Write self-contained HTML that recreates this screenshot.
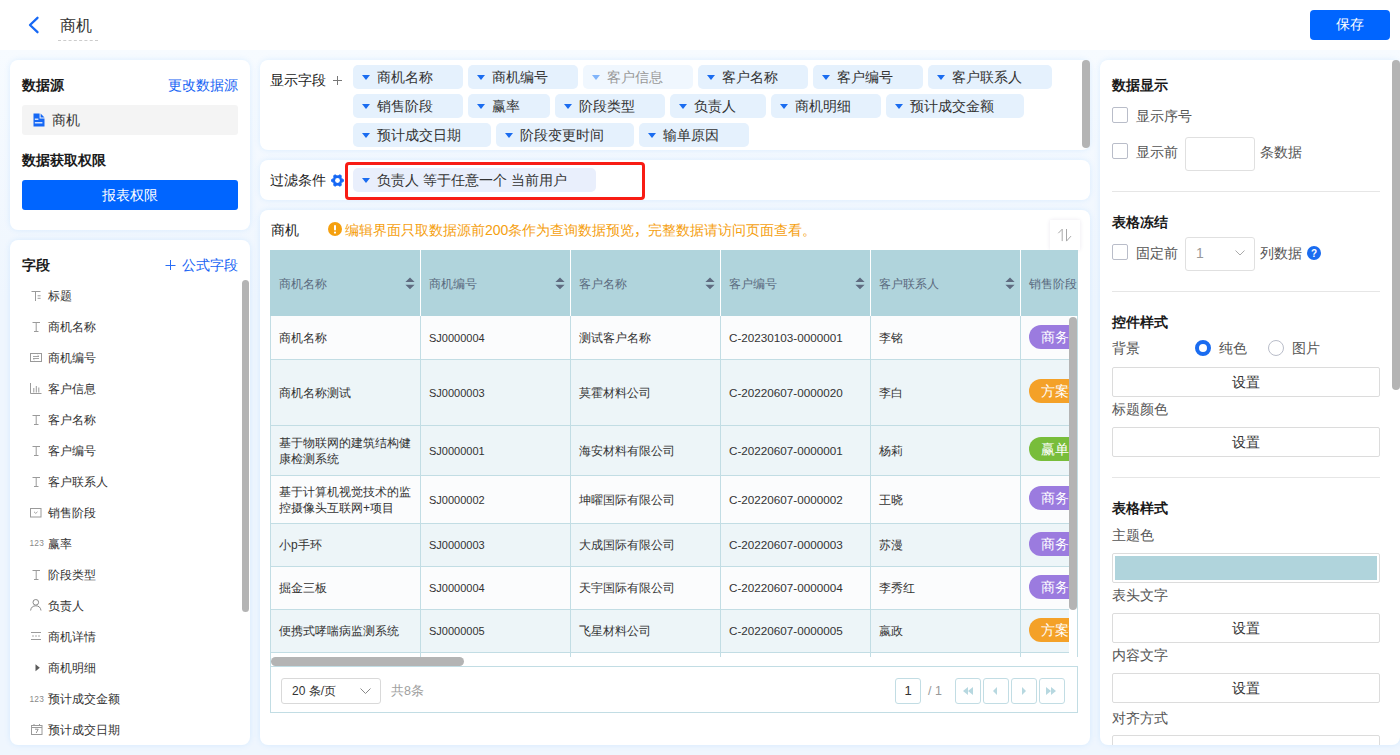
<!DOCTYPE html>
<html><head><meta charset="utf-8">
<style>
*{box-sizing:border-box;margin:0;padding:0}
html,body{width:1400px;height:755px;overflow:hidden}
body{font-family:"Liberation Sans",sans-serif;background:linear-gradient(to bottom,#fff 0,#fff 50px,#f7fbff 50px,#eff6fe 300px,#eff6fe 755px);color:#333;font-size:13px;position:relative}
.abs{position:absolute;white-space:nowrap}
.hdr{left:0;top:0;width:1400px;height:50px;background:#fff}
.panel{position:absolute;background:#fff;border-radius:8px;box-shadow:0 0 6px rgba(0,140,255,.11);overflow:hidden}
.btn{position:absolute;background:#0065ff;color:#fff;border-radius:3px;text-align:center}
.t14{font-size:14px}
.bold{font-weight:bold;color:#1a1a1a}
.blue{color:#1764f4}
.fi{position:absolute;left:38px;font-size:12px;color:#333;line-height:16px}
.ic{position:absolute;left:20px}
.tag{position:absolute;height:24px;background:#e5f1fd;border-radius:5px;font-size:14px;line-height:24px;color:#333}
.tag .tri{position:absolute;left:9px;top:10px;width:0;height:0;border-left:4px solid transparent;border-right:4px solid transparent;border-top:5px solid #1a6cf0}
.tag span{position:absolute;left:24px;top:0}
.cell{position:absolute;font-size:12px;color:#333;line-height:16px}
.lbl{position:absolute;font-size:14px;color:#555;line-height:16px}
.sbtn{position:absolute;left:12px;width:268px;height:30px;border:1px solid #dcdcdc;border-radius:2px;text-align:center;line-height:28px;font-size:14px;color:#333;background:#fff}
.cb{position:absolute;left:12px;width:16px;height:16px;border:1px solid #b9bdc9;border-radius:2px;background:#fff}
.pg{position:absolute;top:678px;width:26px;height:25px;border:1px solid #c2dde4;border-radius:3px;background:#fff}
</style></head><body>

<div class="abs hdr">
  <svg class="abs" style="left:27px;top:16px" width="14" height="18" viewBox="0 0 14 18"><path d="M10.5 1.8 L3 9 L10.5 16.2" fill="none" stroke="#1668f5" stroke-width="2.3" stroke-linecap="round" stroke-linejoin="round"/></svg>
  <div class="abs" style="left:60px;top:16px;font-size:16px;color:#333">商机</div>
  <div class="abs" style="left:58px;top:40px;width:40px;border-top:1px dashed #ccc"></div>
  <div class="btn" style="left:1310px;top:10px;width:80px;height:30px;line-height:29px;font-size:14px;border-radius:4px">保存</div>
</div>

<div class="panel" style="left:10px;top:60px;width:240px;height:170px">
  <div class="abs bold t14" style="left:12px;top:17px">数据源</div>
  <div class="abs blue t14" style="left:158px;top:17px">更改数据源</div>
  <div class="abs" style="left:12px;top:45px;width:216px;height:30px;background:#f4f4f4;border-radius:3px"></div>
  <svg class="abs" style="left:23px;top:53px" width="12" height="14" viewBox="0 0 12 14"><path d="M0.5 0.5 H6.6 V5.4 H11.5 V13.5 H0.5 Z" fill="#1668f5"/><path d="M7.6 0.5 L11.5 4.4 H7.6 Z" fill="#1668f5"/><rect x="1.8" y="5.6" width="3.6" height="1.2" fill="#fff"/><rect x="1.8" y="9.2" width="7.6" height="1.2" fill="#fff"/></svg>
  <div class="abs t14" style="left:42px;top:52px">商机</div>
  <div class="abs bold t14" style="left:12px;top:92px">数据获取权限</div>
  <div class="btn" style="left:12px;top:120px;width:216px;height:30px;line-height:30px;font-size:14px">报表权限</div>
</div>

<div class="panel" style="left:10px;top:240px;width:240px;height:505px">
<div class="abs bold t14" style="left:12px;top:17px">字段</div>
<svg class="abs" style="left:155px;top:20px" width="11" height="11" viewBox="0 0 11 11"><path d="M5.5 0 V10 M0.5 5.5 H10.5" stroke="#2a6ef5" stroke-width="1"/></svg>
<div class="abs blue t14" style="left:172px;top:17px">公式字段</div>
<div class="abs" style="left:21px;top:51px;line-height:10px"><svg width="11" height="11" viewBox="0 0 11 11"><path d="M0.5 0.5 H9.5 M4.5 0.5 V10 M6.6 4.8 H9.6 M6.6 7.3 H9.6" stroke="#9a9a9a" stroke-width="1" fill="none"/></svg></div>
<div class="fi" style="top:48px">标题</div>
<div class="abs" style="left:22px;top:82px;line-height:10px"><svg width="9" height="11" viewBox="0 0 9 11"><path d="M0.5 0.5 H8 M4.2 0.5 V9.5 M2 9.5 H6.5" stroke="#9a9a9a" stroke-width="1" fill="none"/></svg></div>
<div class="fi" style="top:79px">商机名称</div>
<div class="abs" style="left:20px;top:113px;line-height:10px"><svg width="12" height="9" viewBox="0 0 12 9"><rect x="0.5" y="0.5" width="11" height="8" stroke="#9a9a9a" fill="none"/><path d="M3 3.5 H9 L7.6 2.2 M9 5.5 H3 L4.4 6.8" stroke="#9a9a9a" fill="none" stroke-width="0.9"/></svg></div>
<div class="fi" style="top:110px">商机编号</div>
<div class="abs" style="left:20px;top:143px;line-height:10px"><svg width="12" height="11" viewBox="0 0 12 11"><path d="M0.5 0 V10.5 H11.5 M3.8 5 V9.5 M6.3 3 V9.5 M8.8 4.5 V9.5" stroke="#9a9a9a" fill="none"/></svg></div>
<div class="fi" style="top:141px">客户信息</div>
<div class="abs" style="left:22px;top:175px;line-height:10px"><svg width="9" height="11" viewBox="0 0 9 11"><path d="M0.5 0.5 H8 M4.2 0.5 V9.5 M2 9.5 H6.5" stroke="#9a9a9a" stroke-width="1" fill="none"/></svg></div>
<div class="fi" style="top:172px">客户名称</div>
<div class="abs" style="left:22px;top:206px;line-height:10px"><svg width="9" height="11" viewBox="0 0 9 11"><path d="M0.5 0.5 H8 M4.2 0.5 V9.5 M2 9.5 H6.5" stroke="#9a9a9a" stroke-width="1" fill="none"/></svg></div>
<div class="fi" style="top:203px">客户编号</div>
<div class="abs" style="left:22px;top:237px;line-height:10px"><svg width="9" height="11" viewBox="0 0 9 11"><path d="M0.5 0.5 H8 M4.2 0.5 V9.5 M2 9.5 H6.5" stroke="#9a9a9a" stroke-width="1" fill="none"/></svg></div>
<div class="fi" style="top:234px">客户联系人</div>
<div class="abs" style="left:20px;top:268px;line-height:10px"><svg width="12" height="10" viewBox="0 0 12 10"><rect x="0.5" y="0.5" width="10.5" height="8.5" stroke="#9a9a9a" fill="none"/><path d="M4 3.8 L5.75 5.4 L7.5 3.8" stroke="#9a9a9a" fill="none" stroke-width="0.9"/></svg></div>
<div class="fi" style="top:265px">销售阶段</div>
<div class="abs" style="left:19.5px;top:299px;line-height:10px"><span style="display:block;font-family:Liberation Sans,sans-serif;font-size:8.3px;line-height:8px;color:#888;letter-spacing:0.2px;margin-top:-0.5px">123</span></div>
<div class="fi" style="top:296px">赢率</div>
<div class="abs" style="left:22px;top:330px;line-height:10px"><svg width="9" height="11" viewBox="0 0 9 11"><path d="M0.5 0.5 H8 M4.2 0.5 V9.5 M2 9.5 H6.5" stroke="#9a9a9a" stroke-width="1" fill="none"/></svg></div>
<div class="fi" style="top:327px">阶段类型</div>
<div class="abs" style="left:20px;top:359px;line-height:10px"><svg width="12" height="12" viewBox="0 0 12 12"><circle cx="5.8" cy="3.3" r="2.8" stroke="#8a8a8a" fill="none"/><path d="M0.6 11.5 C1 8.3 3 6.8 5.8 6.8 C8.6 6.8 10.6 8.3 11 11.5" stroke="#8a8a8a" fill="none"/></svg></div>
<div class="fi" style="top:358px">负责人</div>
<div class="abs" style="left:21px;top:392px;line-height:10px"><svg width="11" height="9" viewBox="0 0 11 9"><path d="M0 0.5 H10 M0 7.5 H10" stroke="#9a9a9a" fill="none"/><path d="M1 4 H9.5" stroke="#aaa" stroke-dasharray="2 1" fill="none"/></svg></div>
<div class="fi" style="top:389px">商机详情</div>
<div class="abs" style="left:24.5px;top:423px;line-height:10px"><svg width="6" height="8" viewBox="0 0 6 8"><path d="M0.5 0.3 L4.8 3.8 L0.5 7.3 Z" fill="#5a5a5a"/></svg></div>
<div class="fi" style="top:420px">商机明细</div>
<div class="abs" style="left:19.5px;top:455px;line-height:10px"><span style="display:block;font-family:Liberation Sans,sans-serif;font-size:8.3px;line-height:8px;color:#888;letter-spacing:0.2px;margin-top:-0.5px">123</span></div>
<div class="fi" style="top:451px">预计成交金额</div>
<div class="abs" style="left:21px;top:484px;line-height:10px"><svg width="12" height="11" viewBox="0 0 12 11"><rect x="0.5" y="1.5" width="10.5" height="9" stroke="#9a9a9a" fill="none"/><path d="M0.5 3.5 H11 M3 0 V2 M8.5 0 V2" stroke="#9a9a9a"/><path d="M4 5.2 H7.2 L5.2 9" stroke="#8a8a8a" fill="none" stroke-width="0.9"/></svg></div>
<div class="fi" style="top:482px">预计成交日期</div>
<div class="abs" style="left:232px;top:40px;width:7px;height:332px;background:#b4b4b4;border-radius:4px"></div>
</div>
<div class="panel" style="left:260px;top:60px;width:830px;height:90px">
<div class="abs t14" style="left:10px;top:12px;color:#222">显示字段</div>
<svg class="abs" style="left:73px;top:16px" width="9" height="9" viewBox="0 0 9 9"><path d="M4.5 0 V9 M0 4.5 H9" stroke="#777" stroke-width="1"/></svg>
<div class="tag" style="left:93px;top:5px;width:110px;"><i class="tri" style=""></i><span>商机名称</span></div>
<div class="tag" style="left:208px;top:5px;width:110px;"><i class="tri" style=""></i><span>商机编号</span></div>
<div class="tag" style="left:323px;top:5px;width:110px;background:#f0f7fe;color:#999"><i class="tri" style="border-top-color:#80b4fa"></i><span>客户信息</span></div>
<div class="tag" style="left:438px;top:5px;width:110px;"><i class="tri" style=""></i><span>客户名称</span></div>
<div class="tag" style="left:553px;top:5px;width:110px;"><i class="tri" style=""></i><span>客户编号</span></div>
<div class="tag" style="left:668px;top:5px;width:124px;"><i class="tri" style=""></i><span>客户联系人</span></div>
<div class="tag" style="left:93px;top:34px;width:110px;"><i class="tri" style=""></i><span>销售阶段</span></div>
<div class="tag" style="left:208px;top:34px;width:82px;"><i class="tri" style=""></i><span>赢率</span></div>
<div class="tag" style="left:295px;top:34px;width:110px;"><i class="tri" style=""></i><span>阶段类型</span></div>
<div class="tag" style="left:410px;top:34px;width:96px;"><i class="tri" style=""></i><span>负责人</span></div>
<div class="tag" style="left:511px;top:34px;width:110px;"><i class="tri" style=""></i><span>商机明细</span></div>
<div class="tag" style="left:626px;top:34px;width:138px;"><i class="tri" style=""></i><span>预计成交金额</span></div>
<div class="tag" style="left:93px;top:63px;width:138px;"><i class="tri" style=""></i><span>预计成交日期</span></div>
<div class="tag" style="left:236px;top:63px;width:138px;"><i class="tri" style=""></i><span>阶段变更时间</span></div>
<div class="tag" style="left:379px;top:63px;width:110px;"><i class="tri" style=""></i><span>输单原因</span></div>
</div>
<div class="abs" style="left:1082px;top:60px;width:8px;height:88px;background:#b4b4b4;border-radius:4px"></div>
<div class="panel" style="left:260px;top:160px;width:830px;height:40px">
<div class="abs t14" style="left:10px;top:12px;color:#222">过滤条件</div>
<svg class="abs" style="left:71px;top:14px" width="13" height="13" viewBox="0 0 13 13"><path d="M12.65 5.69 L12.65 7.31 L10.84 8.30 L10.23 9.36 L10.27 11.42 L8.87 12.23 L7.11 11.16 L5.89 11.16 L4.13 12.23 L2.73 11.42 L2.77 9.36 L2.16 8.30 L0.35 7.31 L0.35 5.69 L2.16 4.70 L2.77 3.64 L2.73 1.58 L4.13 0.77 L5.89 1.84 L7.11 1.84 L8.87 0.77 L10.27 1.58 L10.23 3.64 L10.84 4.70 Z" fill="#1668f5" stroke="#1668f5" stroke-width="0.8" stroke-linejoin="round"/><circle cx="6.5" cy="6.5" r="2.4" fill="#fff"/></svg>
<div class="tag" style="left:93px;top:8px;width:243px;background:#e9effc"><i class="tri"></i><span>负责人 等于任意一个 当前用户</span></div>
</div>
<div class="abs" style="left:345px;top:162px;width:300px;height:38px;border:3px solid #f81c14;border-radius:4px"></div>
<div class="panel" style="left:260px;top:210px;width:830px;height:535px">
<div class="abs t14" style="left:11px;top:12px;color:#222">商机</div>
<svg class="abs" style="left:68px;top:12px" width="14" height="14" viewBox="0 0 14 14"><circle cx="7" cy="7" r="7" fill="#f5a00f"/><rect x="6" y="3" width="2" height="5.5" rx="1" fill="#fff"/><circle cx="7" cy="10.6" r="1.1" fill="#fff"/></svg>
<div class="abs t14" style="left:85px;top:12px;color:#f5a00f">编辑界面只取数据源前200条作为查询数据预览<span lang="zh-CN" style="line-height:0">，</span>完整数据请访问页面查看。</div>
<div class="abs" style="left:790px;top:10px;width:30px;height:30px;background:#fff;box-shadow:0 0 4px rgba(60,40,120,.10)"></div>
<svg class="abs" style="left:795px;top:16px" width="20" height="18" viewBox="0 0 20 18"><path d="M3.3 7.2 L7.2 3.2 V15.1 M11.5 3 V15.1 L16 10.1" stroke="#a8a8a8" stroke-width="1" fill="none"/></svg>
</div>
<div class="abs" style="left:270px;top:250px;width:808px;height:407px;overflow:hidden">
<div class="abs" style="left:0;top:0;width:808px;height:66px;background:#b0d4dc"></div>
<div class="cell" style="left:9px;top:26px;color:#5a6a7e">商机名称</div>
<svg class="abs" style="left:135px;top:27px" width="10" height="13" viewBox="0 0 10 13"><path d="M5 0.4 L9.6 5 H0.4 Z M0.4 7.8 H9.6 L5 12.2 Z" fill="#5f6b80"/></svg>
<div class="abs" style="left:150px;top:0;width:1px;height:66px;background:#fff"></div>
<div class="cell" style="left:159px;top:26px;color:#5a6a7e">商机编号</div>
<svg class="abs" style="left:285px;top:27px" width="10" height="13" viewBox="0 0 10 13"><path d="M5 0.4 L9.6 5 H0.4 Z M0.4 7.8 H9.6 L5 12.2 Z" fill="#5f6b80"/></svg>
<div class="abs" style="left:300px;top:0;width:1px;height:66px;background:#fff"></div>
<div class="cell" style="left:309px;top:26px;color:#5a6a7e">客户名称</div>
<svg class="abs" style="left:435px;top:27px" width="10" height="13" viewBox="0 0 10 13"><path d="M5 0.4 L9.6 5 H0.4 Z M0.4 7.8 H9.6 L5 12.2 Z" fill="#5f6b80"/></svg>
<div class="abs" style="left:450px;top:0;width:1px;height:66px;background:#fff"></div>
<div class="cell" style="left:459px;top:26px;color:#5a6a7e">客户编号</div>
<svg class="abs" style="left:585px;top:27px" width="10" height="13" viewBox="0 0 10 13"><path d="M5 0.4 L9.6 5 H0.4 Z M0.4 7.8 H9.6 L5 12.2 Z" fill="#5f6b80"/></svg>
<div class="abs" style="left:600px;top:0;width:1px;height:66px;background:#fff"></div>
<div class="cell" style="left:609px;top:26px;color:#5a6a7e">客户联系人</div>
<svg class="abs" style="left:735px;top:27px" width="10" height="13" viewBox="0 0 10 13"><path d="M5 0.4 L9.6 5 H0.4 Z M0.4 7.8 H9.6 L5 12.2 Z" fill="#5f6b80"/></svg>
<div class="abs" style="left:750px;top:0;width:1px;height:66px;background:#fff"></div>
<div class="cell" style="left:759px;top:26px;color:#5a6a7e">销售阶段</div>
<div class="abs" style="left:0;top:66px;width:799px;height:43px;background:#fbfcfd"></div>
<div class="cell" style="left:9px;top:80.0px;">商机名称</div>
<div class="cell" style="left:159px;top:80.0px;font-size:11px;">SJ0000004</div>
<div class="cell" style="left:309px;top:80.0px;">测试客户名称</div>
<div class="cell" style="left:459px;top:80.0px;font-size:11.7px;">C-20230103-0000001</div>
<div class="cell" style="left:609px;top:80.0px;">李铭</div>
<div class="abs" style="left:759px;top:74.5px;width:80px;height:24px;border-radius:12px;background:#9b7bdf;color:#fff;font-size:14px;line-height:24px;padding-left:12px">商务谈判</div>
<div class="abs" style="left:0;top:109px;width:799px;height:66px;background:#edf5f8"></div>
<div class="cell" style="left:9px;top:134.5px;">商机名称测试</div>
<div class="cell" style="left:159px;top:134.5px;font-size:11px;">SJ0000003</div>
<div class="cell" style="left:309px;top:134.5px;">莫霍材料公司</div>
<div class="cell" style="left:459px;top:134.5px;font-size:11.7px;">C-20220607-0000020</div>
<div class="cell" style="left:609px;top:134.5px;">李白</div>
<div class="abs" style="left:759px;top:129.0px;width:80px;height:24px;border-radius:12px;background:#f4a128;color:#fff;font-size:14px;line-height:24px;padding-left:12px">方案报价</div>
<div class="abs" style="left:0;top:175px;width:799px;height:50px;background:#edf5f8"></div>
<div class="cell" style="left:9px;top:184.5px;">基于物联网的建筑结构健<br>康检测系统</div>
<div class="cell" style="left:159px;top:192.5px;font-size:11px;">SJ0000001</div>
<div class="cell" style="left:309px;top:192.5px;">海安材料有限公司</div>
<div class="cell" style="left:459px;top:192.5px;font-size:11.7px;">C-20220607-0000001</div>
<div class="cell" style="left:609px;top:192.5px;">杨莉</div>
<div class="abs" style="left:759px;top:187.0px;width:80px;height:24px;border-radius:12px;background:#78bd3a;color:#fff;font-size:14px;line-height:24px;padding-left:12px">赢单</div>
<div class="abs" style="left:0;top:225px;width:799px;height:48px;background:#fbfcfd"></div>
<div class="cell" style="left:9px;top:233.5px;">基于计算机视觉技术的监<br>控摄像头互联网+项目</div>
<div class="cell" style="left:159px;top:241.5px;font-size:11px;">SJ0000002</div>
<div class="cell" style="left:309px;top:241.5px;">坤曜国际有限公司</div>
<div class="cell" style="left:459px;top:241.5px;font-size:11.7px;">C-20220607-0000002</div>
<div class="cell" style="left:609px;top:241.5px;">王晓</div>
<div class="abs" style="left:759px;top:236.0px;width:80px;height:24px;border-radius:12px;background:#9b7bdf;color:#fff;font-size:14px;line-height:24px;padding-left:12px">商务谈判</div>
<div class="abs" style="left:0;top:273px;width:799px;height:43px;background:#edf5f8"></div>
<div class="cell" style="left:9px;top:287.0px;">小p手环</div>
<div class="cell" style="left:159px;top:287.0px;font-size:11px;">SJ0000003</div>
<div class="cell" style="left:309px;top:287.0px;">大成国际有限公司</div>
<div class="cell" style="left:459px;top:287.0px;font-size:11.7px;">C-20220607-0000003</div>
<div class="cell" style="left:609px;top:287.0px;">苏漫</div>
<div class="abs" style="left:759px;top:281.5px;width:80px;height:24px;border-radius:12px;background:#9b7bdf;color:#fff;font-size:14px;line-height:24px;padding-left:12px">商务谈判</div>
<div class="abs" style="left:0;top:316px;width:799px;height:43px;background:#fbfcfd"></div>
<div class="cell" style="left:9px;top:330.0px;">掘金三板</div>
<div class="cell" style="left:159px;top:330.0px;font-size:11px;">SJ0000004</div>
<div class="cell" style="left:309px;top:330.0px;">天宇国际有限公司</div>
<div class="cell" style="left:459px;top:330.0px;font-size:11.7px;">C-20220607-0000004</div>
<div class="cell" style="left:609px;top:330.0px;">李秀红</div>
<div class="abs" style="left:759px;top:324.5px;width:80px;height:24px;border-radius:12px;background:#9b7bdf;color:#fff;font-size:14px;line-height:24px;padding-left:12px">商务谈判</div>
<div class="abs" style="left:0;top:359px;width:799px;height:43px;background:#edf5f8"></div>
<div class="cell" style="left:9px;top:373.0px;">便携式哮喘病监测系统</div>
<div class="cell" style="left:159px;top:373.0px;font-size:11px;">SJ0000005</div>
<div class="cell" style="left:309px;top:373.0px;">飞星材料公司</div>
<div class="cell" style="left:459px;top:373.0px;font-size:11.7px;">C-20220607-0000005</div>
<div class="cell" style="left:609px;top:373.0px;">嬴政</div>
<div class="abs" style="left:759px;top:367.5px;width:80px;height:24px;border-radius:12px;background:#f4a128;color:#fff;font-size:14px;line-height:24px;padding-left:12px">方案报价</div>
<div class="abs" style="left:0;top:109px;width:799px;height:1px;background:#c2dde4"></div>
<div class="abs" style="left:0;top:175px;width:799px;height:1px;background:#c2dde4"></div>
<div class="abs" style="left:0;top:225px;width:799px;height:1px;background:#c2dde4"></div>
<div class="abs" style="left:0;top:273px;width:799px;height:1px;background:#c2dde4"></div>
<div class="abs" style="left:0;top:316px;width:799px;height:1px;background:#c2dde4"></div>
<div class="abs" style="left:0;top:359px;width:799px;height:1px;background:#c2dde4"></div>
<div class="abs" style="left:0;top:402px;width:799px;height:1px;background:#c2dde4"></div>
<div class="abs" style="left:0;top:66px;width:1px;height:341px;background:#c2dde4"></div>
<div class="abs" style="left:150px;top:66px;width:1px;height:341px;background:#c2dde4"></div>
<div class="abs" style="left:300px;top:66px;width:1px;height:341px;background:#c2dde4"></div>
<div class="abs" style="left:450px;top:66px;width:1px;height:341px;background:#c2dde4"></div>
<div class="abs" style="left:600px;top:66px;width:1px;height:341px;background:#c2dde4"></div>
<div class="abs" style="left:750px;top:66px;width:1px;height:341px;background:#c2dde4"></div>
<div class="abs" style="left:799px;top:66px;width:9px;height:341px;background:#fff"></div>
<div class="abs" style="left:807px;top:66px;width:1px;height:341px;background:#c2dde4"></div>
<div class="abs" style="left:799px;top:67px;width:8px;height:293px;background:#b4b4b4;border-radius:4px"></div>
</div>
<div class="abs" style="left:270px;top:657px;width:808px;height:9px;background:#fff;border-left:1px solid #c2dde4"></div>
<div class="abs" style="left:271px;top:657px;width:193px;height:9px;background:#b4b4b4;border-radius:5px"></div>
<div class="abs" style="left:270px;top:666px;width:808px;height:47px;border:1px solid #c2dde4;background:#fff"></div>
<div class="abs" style="left:281px;top:678px;width:100px;height:26px;border:1px solid #d9d9d9;border-radius:3px;background:#fff"></div>
<div class="abs" style="left:292px;top:683px;font-size:12px;color:#333;line-height:16px">20 条/页</div>
<svg class="abs" style="left:360px;top:688px" width="11" height="7" viewBox="0 0 11 7"><path d="M0.5 0.5 L5.5 5.5 L10.5 0.5" stroke="#888" fill="none"/></svg>
<div class="abs" style="left:391px;top:683px;font-size:12.5px;color:#a0a0a0;line-height:16px">共8条</div>
<div class="abs" style="left:895px;top:678px;width:26px;height:26px;border:1px solid #c2dde4;border-radius:3px;background:#fff;text-align:center;font-size:13px;line-height:24px;color:#333">1</div>
<div class="abs" style="left:928px;top:683px;font-size:12.5px;color:#999;line-height:16px">/ 1</div>
<div class="pg" style="left:955px;height:26px"><svg class="abs" style="left:6px;top:8px" width="12" height="8" viewBox="0 0 12 8"><path d="M6 0 L1 4 L6 8 Z M11 0 L6 4 L11 8 Z" fill="#b7d8e0"/></svg></div>
<div class="pg" style="left:983px;height:26px"><svg class="abs" style="left:6px;top:8px" width="12" height="8" viewBox="0 0 12 8"><path d="M7 0 L3 4 L7 8 Z" fill="#b7d8e0"/></svg></div>
<div class="pg" style="left:1011px;height:26px"><svg class="abs" style="left:6px;top:8px" width="12" height="8" viewBox="0 0 12 8"><path d="M4 0 L8 4 L4 8 Z" fill="#b7d8e0"/></svg></div>
<div class="pg" style="left:1039px;height:26px"><svg class="abs" style="left:6px;top:8px" width="12" height="8" viewBox="0 0 12 8"><path d="M0 0 L5 4 L0 8 Z M5 0 L10 4 L5 8 Z" fill="#b7d8e0"/></svg></div>
<div class="panel" style="left:1100px;top:60px;width:300px;height:685px">
<div class="abs bold t14" style="left:12px;top:17px">数据显示</div>
<div class="cb" style="top:47px"></div><div class="lbl" style="left:36px;top:48px">显示序号</div>
<div class="cb" style="top:83px"></div><div class="lbl" style="left:36px;top:84px">显示前</div>
<div class="abs" style="left:85px;top:77px;width:70px;height:34px;border:1px solid #e0e0e0;border-radius:3px"></div>
<div class="lbl" style="left:160px;top:84px">条数据</div>
<div class="abs" style="left:12px;top:131px;width:268px;height:1px;background:#e6e6e6"></div>
<div class="abs bold t14" style="left:12px;top:154px">表格冻结</div>
<div class="cb" style="top:184px"></div><div class="lbl" style="left:36px;top:185px">固定前</div>
<div class="abs" style="left:85px;top:177px;width:70px;height:34px;border:1px solid #e0e0e0;border-radius:3px"></div>
<div class="lbl" style="left:96px;top:185px;color:#999">1</div>
<svg class="abs" style="left:135px;top:190px" width="10" height="6" viewBox="0 0 10 6"><path d="M0.5 0.5 L5 5 L9.5 0.5" stroke="#aaa" fill="none"/></svg>
<div class="lbl" style="left:160px;top:185px">列数据</div>
<svg class="abs" style="left:207px;top:186px" width="14" height="14" viewBox="0 0 14 14"><circle cx="7" cy="7" r="7" fill="#1a6cf0"/><text x="7" y="11" text-anchor="middle" font-size="10" font-weight="bold" fill="#fff" font-family="Liberation Sans">?</text></svg>
<div class="abs" style="left:12px;top:231px;width:268px;height:1px;background:#e6e6e6"></div>
<div class="abs bold t14" style="left:12px;top:254px">控件样式</div>
<div class="lbl" style="left:12px;top:280px">背景</div>
<div class="abs" style="left:95px;top:280px;width:16px;height:16px;border-radius:50%;border:4.5px solid #1a6cf0;background:#fff"></div>
<div class="lbl" style="left:119px;top:280px">纯色</div>
<div class="abs" style="left:168px;top:280px;width:16px;height:16px;border-radius:50%;border:1px solid #b9bdc9;background:#fff"></div>
<div class="lbl" style="left:192px;top:280px">图片</div>
<div class="sbtn" style="top:307px">设置</div>
<div class="lbl" style="left:12px;top:341px">标题颜色</div>
<div class="sbtn" style="top:367px">设置</div>
<div class="abs" style="left:12px;top:417px;width:268px;height:1px;background:#e6e6e6"></div>
<div class="abs bold t14" style="left:12px;top:440px">表格样式</div>
<div class="lbl" style="left:12px;top:467px">主题色</div>
<div class="abs" style="left:12px;top:493px;width:268px;height:30px;border:1px solid #dcdcdc;border-radius:2px;padding:2px"><div style="width:100%;height:100%;background:#b0d4dc"></div></div>
<div class="lbl" style="left:12px;top:527px">表头文字</div>
<div class="sbtn" style="top:553px">设置</div>
<div class="lbl" style="left:12px;top:587px">内容文字</div>
<div class="sbtn" style="top:613px">设置</div>
<div class="lbl" style="left:12px;top:650px">对齐方式</div>
<div class="sbtn" style="top:675px"></div>
</div>
<div class="abs" style="left:1392px;top:60px;width:8px;height:330px;background:#b4b4b4;border-radius:4px"></div>
</body></html>
